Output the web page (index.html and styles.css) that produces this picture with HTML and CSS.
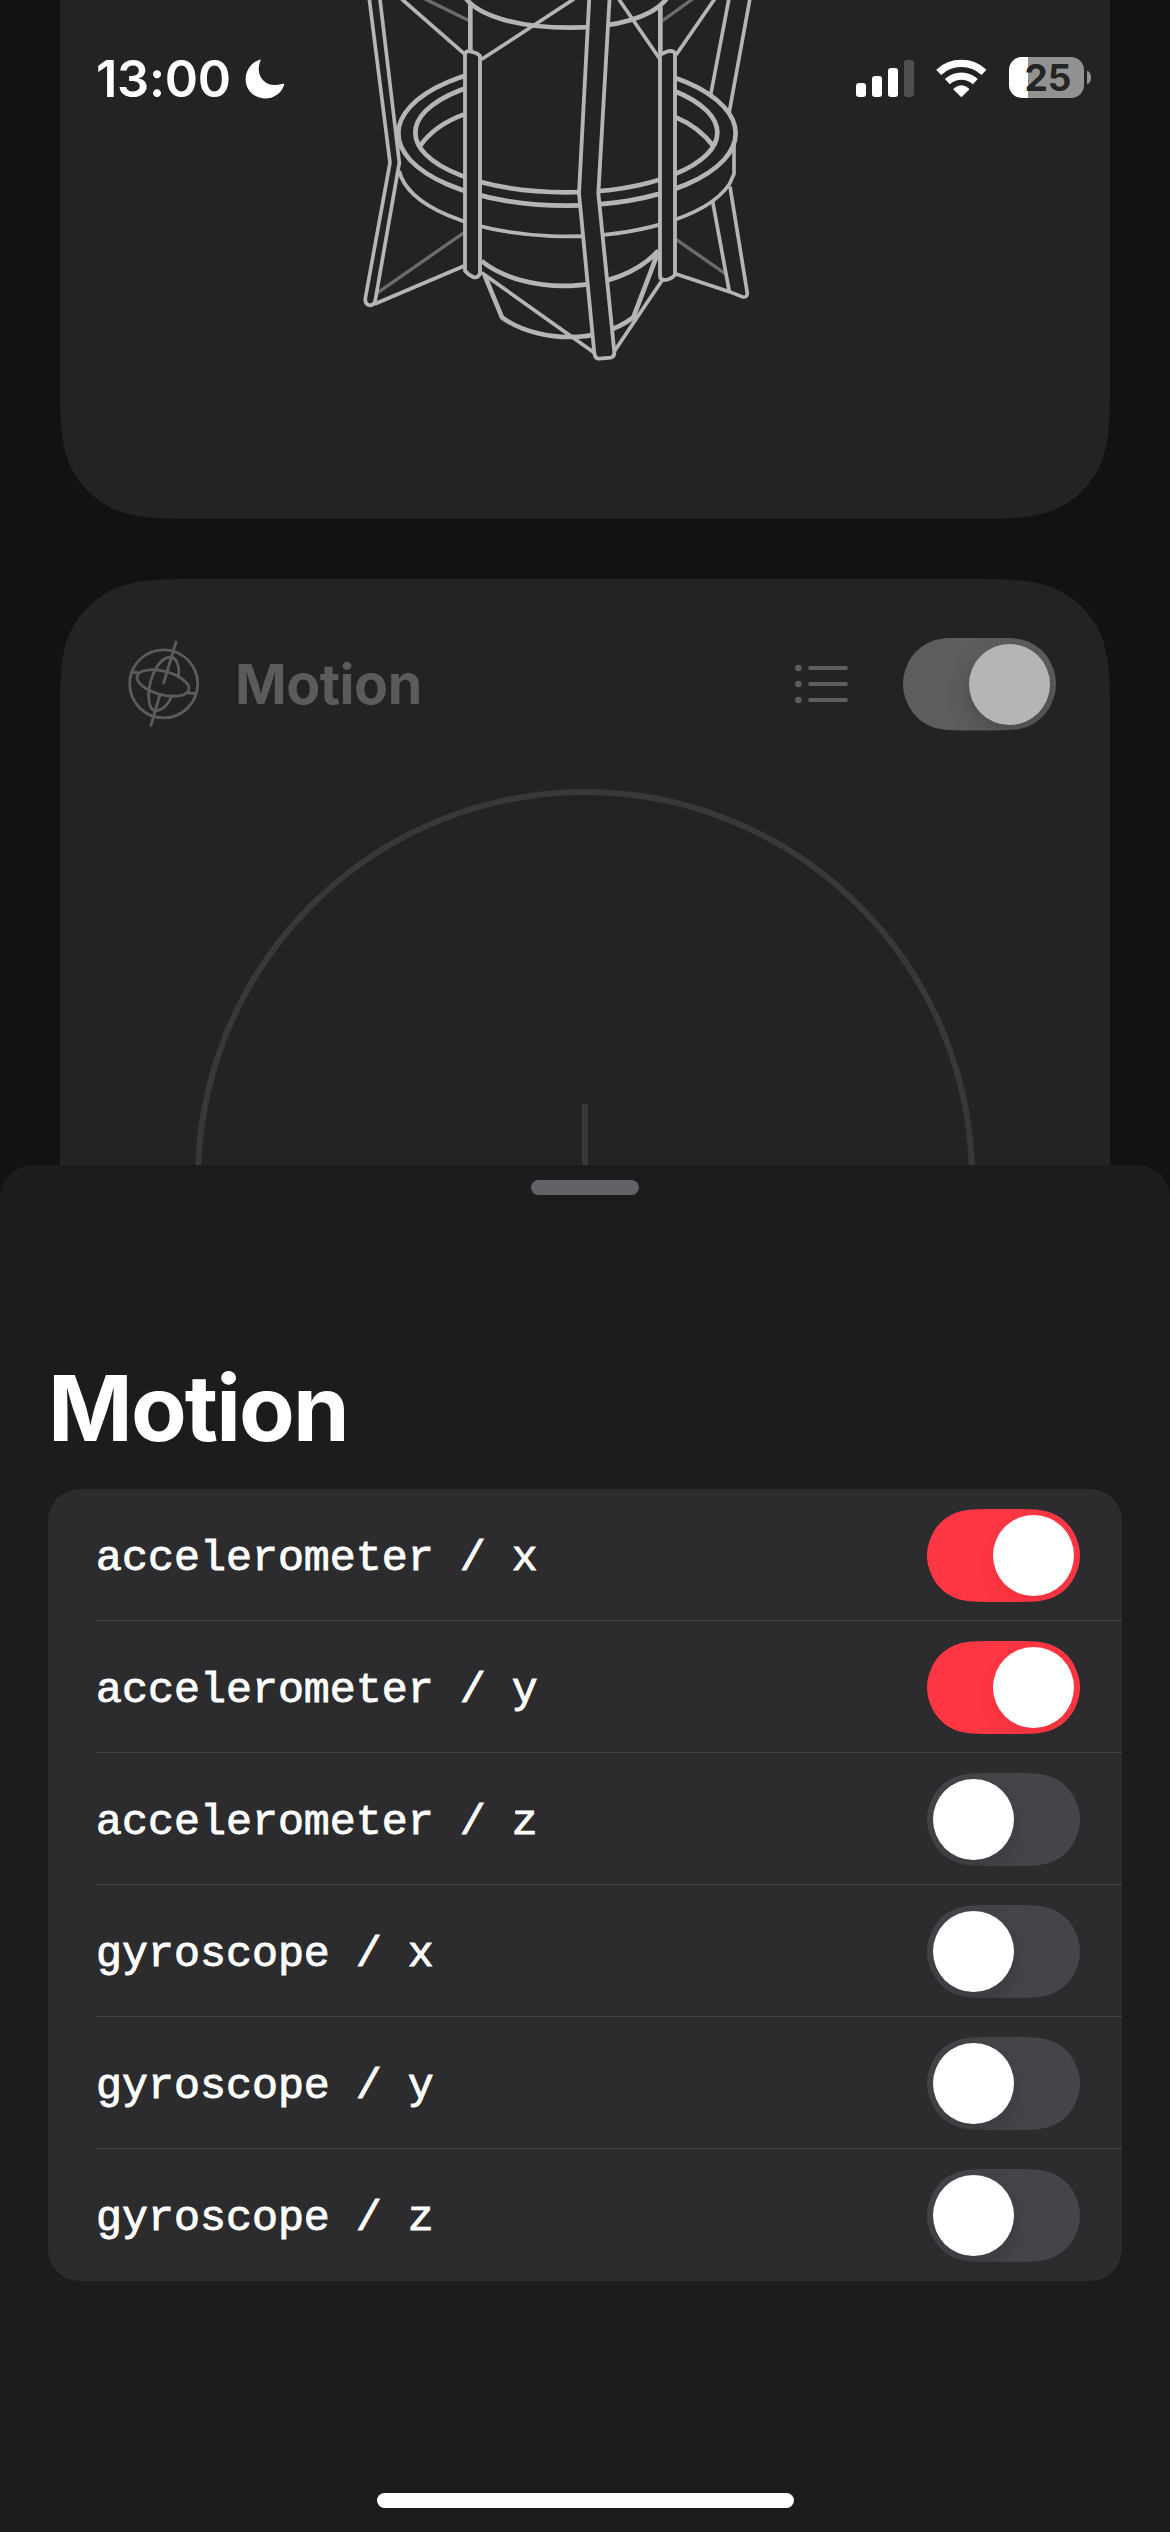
FILE: index.html
```
<!DOCTYPE html>
<html lang="en">
<head>
<meta charset="utf-8">
<title>Motion</title>
<link rel="stylesheet" href="styles.css">
</head>
<body>
<div class="screen">
  <main class="backdrop">
    <section class="card card-mic">
      <svg class="mic" viewBox="0 0 1290 1110" aria-hidden="true">
        <g class="dim">
          <path d="M255 -3L388 62M1058 -3L968 62M110 880L372 698M1008 718L1160 824"/>
        </g>
        <g class="thin">
          <path class="solid" d="M87 -10L150 488L76 895Q74 914 91 916Q104 914 106 900L178 488L119 -10"/>
          <path d="M1167 -5L1112 285M1230 -5L1168 335M1118 605L1168 875M1170 560L1222 880Q1222 894 1206 890L1168 875L1008 822"/>
        </g>
        <g class="thick">
          <ellipse class="solid" cx="681" cy="400" rx="506" ry="217"/>
          <ellipse cx="679" cy="398" rx="453" ry="179"/>
          <path d="M240 438C270 395 320 362 372 343M1008 352C1060 374 1095 405 1120 438"/>
        </g>
        <path class="mask" d="M397 160H983V500H397Z"/>
        <g class="thick">
          <path d="M378 -4C420 50 540 83 690 83C830 83 940 50 980 -4M391 12V158M961 15V160"/>
          <path d="M425 783C550 885 830 890 955 752M434 826L486 952C550 1000 640 1011 690 1011C760 1011 830 990 880 952L955 755"/>
        </g>
        <g class="thin">
          <path d="M178 513A506 216 0 0 0 1168 553L1182 522V430"/>
          <path d="M185 -3L375 163M702 -3L425 178M836 -3L960 178M1124 -3L1008 165"/>
          <path d="M425 818L765 1060M965 843L822 1055M104 912L372 798"/>
        </g>
        <g class="post">
          <path d="M748 -10L717 580L763 1060Q766 1077 778 1076L812 1073Q824 1070 823 1056L775 580L809 -10"/>
          <path d="M375 162Q378 152 390 154Q412 158 420 168V820Q415 834 402 832Q385 826 375 812Z"/>
          <path d="M960 164L983 154Q1005 150 1005 164V825Q990 840 972 840Q960 838 960 828Z"/>
        </g>
      </svg>
    </section>
    <section class="card card-motion">
      <header class="card-head">
        <svg class="gyro" viewBox="219 204 240 276" aria-hidden="true">
          <circle cx="341" cy="341.500" r="102"/>
          <path d="M378 216L341 339M330 373L303 466"/>
          <path d="M246 307L264 308M416 369L437 371"/>
          <ellipse cx="339" cy="339" rx="80" ry="35" transform="rotate(15 339 339)"/>
          <path d="M385 322C390 290 380 262 361 261C335 263 313 292 301 338C292 375 294 425 320 422C340 420 356 400 366 378"/>
        </svg>
        <span class="card-title">Motion</span>
        <svg class="list-icon" viewBox="0 0 54 40" aria-hidden="true">
          <circle cx="3.500" cy="4" r="3.300"/><circle cx="3.500" cy="20" r="3.300"/><circle cx="3.500" cy="36" r="3.300"/>
          <path d="M15 4H51M15 20H51M15 36H51"/>
        </svg>
        <span class="toggle on muted"><span class="knob"></span></span>
      </header>
      <svg class="dial" viewBox="0 0 780 400" aria-hidden="true">
        <circle cx="390" cy="390" r="387"/>
        <path d="M390 315V400"/>
      </svg>
    </section>
  </main>

  <div class="status">
    <div class="status-left">
      <span class="time">13:00</span>
      <svg class="moon" viewBox="554 85 120 120" aria-hidden="true"><path d="M598 87C560 99 543 148 567 180C596 218 656 209 671 164C673 159 669 158 664 160C618 174 582 138 600 92C602 87 601 86 598 87Z"/></svg>
    </div>
    <div class="status-right">
      <svg class="signal" viewBox="0 0 58 37" aria-hidden="true">
        <rect x="0" y="23" width="10" height="14" rx="3"/><rect x="16" y="16" width="10" height="21" rx="3"/><rect x="32" y="8" width="10" height="29" rx="3"/><rect class="weak" x="48" y="0" width="10" height="37" rx="3"/>
      </svg>
      <svg class="wifi" viewBox="318 84 153 117" aria-hidden="true">
        <path class="arc" d="M326 124A100 100 0 0 1 462 124M352 152A61 61 0 0 1 436 152"/>
        <path d="M394 199L371 176Q370 174 372 172Q394 154 416 172Q418 174 417 176Z"/>
      </svg>
      <div class="battery"><div class="cell">25</div><div class="nub"></div></div>
    </div>
  </div>

  <section class="sheet">
    <div class="grabber"></div>
    <h1 class="title">Motion</h1>
    <ul class="list">
      <li class="row"><span class="label">accelerometer / x</span><span class="toggle on"><span class="knob"></span></span></li>
      <li class="row"><span class="label">accelerometer / y</span><span class="toggle on"><span class="knob"></span></span></li>
      <li class="row"><span class="label">accelerometer / z</span><span class="toggle"><span class="knob"></span></span></li>
      <li class="row"><span class="label">gyroscope / x</span><span class="toggle"><span class="knob"></span></span></li>
      <li class="row"><span class="label">gyroscope / y</span><span class="toggle"><span class="knob"></span></span></li>
      <li class="row"><span class="label">gyroscope / z</span><span class="toggle"><span class="knob"></span></span></li>
    </ul>
    <div class="home"></div>
  </section>
</div>
</body>
</html>
```
FILE: styles.css
```
* { box-sizing: border-box; }
body { margin: 0; background: #121212; font-family: Inter, "Liberation Sans", sans-serif; }
svg { display: block; flex: none; fill: none; }
.screen { position: relative; width: 1170px; height: 2532px; overflow: hidden; background: #121212; }

/* Dimmed content behind the sheet */
.backdrop { display: flex; flex-direction: column; gap: 60px; padding: 0 60px; }
.card { width: 1050px; background: #232323; }
.card-mic {
  height: 519px; padding-left: 280px;
  clip-path: path("M0 0H1050V372.200C1050 414.500 1050 435.600 1042.800 458.400C1033.800 483.200 1014.200 502.800 989.400 511.800C966.600 519 945.500 519 903.200 519H146.800C104.500 519 83.400 519 60.600 511.800C35.800 502.800 16.200 483.200 7.200 458.400C0 435.600 0 414.500 0 372.200Z");
}
.card-motion {
  height: 700px;
  clip-path: path("M0 700V146.800C0 104.500 0 83.400 7.200 60.600C16.200 35.800 35.800 16.200 60.600 7.200C83.400 0 104.500 0 146.800 0H903.200C945.500 0 966.600 0 989.400 7.200C1014.200 16.200 1033.800 35.800 1042.800 60.600C1050 83.400 1050 104.500 1050 146.800V700Z");
}
.mic { width: 430px; height: 370px; stroke: #b5b5b5; stroke-linejoin: round; }
.mic .dim { stroke: #6c6c6c; stroke-width: 10; }
.mic .thin { stroke-width: 11; }
.mic .thick { stroke-width: 14; }
.mic .post { stroke-width: 11.500; fill: #232323; }
.mic .solid { fill: #232323; }
.mic .mask { fill: #232323; stroke: none; }

.card-head { display: flex; align-items: center; height: 210px; padding: 0 54px 0 63px; }
.gyro { width: 80px; height: 92px; stroke: #5b5b5b; stroke-width: 8.500; stroke-linecap: round; }
.card-title { margin-left: 32px; color: #5b5b5b; font-size: 55.500px; font-weight: 700; letter-spacing: -0.500px; line-height: 66px; }
.list-icon { width: 54px; height: 40px; margin-left: auto; margin-right: 54px; fill: #5e5e5e; stroke: none; }
.list-icon path { stroke: #5e5e5e; stroke-width: 4; stroke-linecap: round; }
.dial { width: 780px; height: 400px; margin-left: 135px; stroke: #383838; stroke-width: 6; }

/* Switches */
.toggle {
  display: flex; flex: none; width: 153px; height: 93px; padding: 6px; background: #454449;
  clip-path: path("M71 0C50.600 0 40.400 0 29.400 3.500C17.300 7.900 7.900 17.300 3.500 29.400C1.200 34.700 0 40.500 0 46.500C0 52.500 1.200 58.300 3.500 63.600C7.900 75.700 17.300 85.100 29.400 89.500C40.400 93 50.600 93 71 93H82C102.400 93 112.600 93 123.600 89.500C135.700 85.100 145.100 75.700 149.500 63.600C151.800 58.300 153 52.500 153 46.500C153 40.500 151.800 34.700 149.500 29.400C145.100 17.300 135.700 7.900 123.600 3.500C112.600 0 102.400 0 82 0Z");
}
.toggle.on { justify-content: flex-end; background: #ff3643; }
.toggle.muted { background: #5d5d5d; }
.knob { width: 81px; height: 81px; border-radius: 50%; background: #fff; box-shadow: 0 9px 24px rgba(0, 0, 0, 0.150); }
.toggle.on .knob { box-shadow: 0 9px 24px rgba(0, 0, 0, 0.060); }
.toggle.muted .knob { background: #b5b5b5; box-shadow: 0 9px 24px rgba(0, 0, 0, 0.200); }

/* Status bar */
.status { position: absolute; inset: 0 0 auto 0; display: flex; justify-content: space-between; padding: 57px 79px 0 96px; color: #fff; }
.status-left, .status-right { display: flex; height: 41px; align-items: center; }
.time { width: 149px; padding-top: 1px; font-size: 50.500px; font-weight: 600; line-height: 41px; letter-spacing: -0.300px; white-space: nowrap; }
.moon { width: 40px; height: 40px; margin-top: 2px; fill: #fff; }
.signal { width: 58px; height: 37px; margin: 2px 22px 0 0; fill: #fff; }
.signal .weak { fill: #4f4f4f; }
.wifi { width: 51px; height: 39px; margin: 2px 22px 0 0; fill: #fff; }
.wifi .arc { fill: none; stroke: #fff; stroke-width: 22; }
.battery { display: flex; align-items: center; gap: 3px; }
.cell { width: 75px; height: 41px; border-radius: 13px; padding-left: 3px; background: linear-gradient(90deg, #fff 19px, #929292 19px); color: #242424; font-size: 37px; font-weight: 700; line-height: 42px; text-align: center; }
.nub { width: 4px; height: 13px; border-radius: 0 4px 4px 0 / 0 7px 7px 0; background: #929292; }

/* Bottom sheet */
.sheet { position: absolute; inset: 1165px 0 0 0; display: flex; flex-direction: column; padding: 15px 48px 24px; border-radius: 32px 32px 0 0; background: #1c1c1e; }
.grabber { align-self: center; width: 108px; height: 15px; border-radius: 7.500px; background: #636267; }
.title { margin: 158px 0 0; height: 136px; color: #fff; font-size: 91px; font-weight: 700; line-height: 110px; letter-spacing: -1.900px; }
.list { margin: 0; padding: 0; list-style: none; border-radius: 32px; background: #2c2c2e; overflow: hidden; }
.row { display: flex; align-items: center; justify-content: space-between; height: 132px; margin-left: 48px; padding: 2px 42px 0 0; border-bottom: 1px solid #434345; }
.row:last-child { border-bottom-color: transparent; }
.label { padding-top: 5px; color: #fff; font-family: "Liberation Mono", monospace; font-size: 43.300px; -webkit-text-stroke: 0.900px #fff; white-space: pre; }
.home { align-self: center; width: 417px; height: 15px; margin-top: auto; border-radius: 7.500px; background: #fff; }
```
